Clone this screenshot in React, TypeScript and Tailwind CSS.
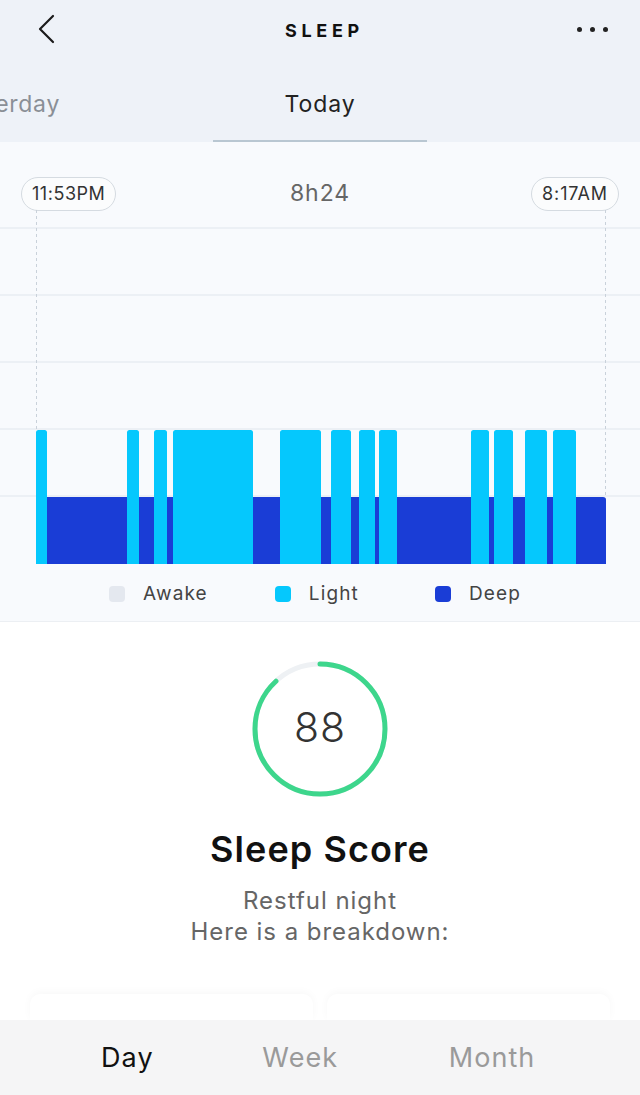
import React from "react";

type Seg = { x: number; w: number };

// light stage segments, measured against the 640px frame
const lightBars: Seg[] = [
  { x: 36, w: 11 },
  { x: 127, w: 12 },
  { x: 154, w: 13 },
  { x: 173, w: 80 },
  { x: 280, w: 41 },
  { x: 331, w: 20 },
  { x: 359, w: 16 },
  { x: 379, w: 18 },
  { x: 471, w: 18 },
  { x: 494, w: 19 },
  { x: 525, w: 22 },
  { x: 553, w: 23 },
];

const gridLines = [18, 85, 152, 219, 286];

const SleepChart: React.FC = () => {
  return (
    <svg width="640" height="354" viewBox="0 0 640 354" className="block">
      {gridLines.map((y) => (
        <line key={y} x1="0" x2="640" y1={y} y2={y} stroke="#e8edf2" strokeWidth="1.5" />
      ))}
      <line x1="36.5" x2="36.5" y1="0" y2="354" stroke="#c9d1da" strokeWidth="1" strokeDasharray="3 3" />
      <line x1="605.5" x2="605.5" y1="0" y2="354" stroke="#c9d1da" strokeWidth="1" strokeDasharray="3 3" />
      <path d="M47 287 H603 Q606 287 606 290 V354 H47 Z" fill="#1a3dd6" />
      {lightBars.map((b) => (
        <path
          key={b.x}
          d={`M${b.x} 354 V222.5 Q${b.x} 220 ${b.x + 2.5} 220 H${b.x + b.w - 2.5} Q${b.x + b.w} 220 ${b.x + b.w} 222.5 V354 Z`}
          fill="#05c8fd"
        />
      ))}
    </svg>
  );
};

const ScoreRing: React.FC<{ value: number }> = ({ value }) => {
  const r = 65;
  const c = 2 * Math.PI * r;
  return (
    <div className="relative w-[140px] h-[140px]">
      <svg width="140" height="140" viewBox="0 0 140 140" className="-rotate-90">
        <circle cx="70" cy="70" r={r} fill="none" stroke="#eef1f4" strokeWidth="5" />
        <circle
          cx="70"
          cy="70"
          r={r}
          fill="none"
          stroke="#3dd68c"
          strokeWidth="5"
          strokeLinecap="round"
          strokeDasharray={`${(c * value) / 100} ${c}`}
        />
      </svg>
      <div className="absolute inset-0 flex items-center justify-center text-[41px] font-light tracking-[0.02em] text-[#333] pb-[3px]">
        {value}
      </div>
    </div>
  );
};

const App: React.FC = () => {
  return (
    <div
      className="w-[640px] h-[1095px] overflow-hidden flex flex-col bg-white"
      style={{ fontFamily: "Inter, 'Noto Sans', sans-serif" }}
    >
      <div className="bg-[#eef2f8]">
        <div className="h-[58px] flex items-center justify-between pl-[36px] pr-[32px]">
          <svg width="22" height="30" viewBox="0 0 22 30" fill="none">
            <path d="M17 2 L4 15 L17 28" stroke="#1b1b1b" strokeWidth="2.2" strokeLinecap="round" strokeLinejoin="round" />
          </svg>
          <div className="text-[18px] font-bold tracking-[0.26em] text-[#111] pl-[14px] pt-[2px]">SLEEP</div>
          <div className="flex gap-[8px]">
            <span className="w-[5px] h-[5px] rounded-full bg-[#222]" />
            <span className="w-[5px] h-[5px] rounded-full bg-[#222]" />
            <span className="w-[5px] h-[5px] rounded-full bg-[#222]" />
          </div>
        </div>
        <div className="grid grid-cols-[213px_214px_213px] h-[84px]">
          <div className="overflow-hidden flex justify-end items-center pr-[153px] whitespace-nowrap text-[23px] tracking-[0.03em] text-[#8a8f96] pt-[8px]">
            Yesterday
          </div>
          <div className="flex flex-col">
            <div className="flex-1 flex items-center justify-center text-[23px] tracking-[0.04em] text-[#222] pt-[10px]">Today</div>
            <div className="h-[2px] bg-[#b9c7d2]" />
          </div>
          <div />
        </div>
      </div>

      <div className="bg-[#f8fafd] border-b border-[#eceff3]">
        <div className="h-[68px] grid grid-cols-[1fr_auto_1fr] items-end px-[21px]">
          <div className="justify-self-start h-[34px] px-[10px] rounded-full border border-[#d5dbe1] bg-[#fbfcfd] flex items-center text-[18px] tracking-[0.03em] text-[#333]">
            11:53PM
          </div>
          <div className="self-start mt-[34px] text-[23px] tracking-[0.04em] text-[#666]">8h24</div>
          <div className="justify-self-end h-[34px] px-[10px] rounded-full border border-[#d5dbe1] bg-[#fbfcfd] flex items-center text-[18px] tracking-[0.05em] text-[#333]">
            8:17AM
          </div>
        </div>
        <SleepChart />
        <div className="h-[57px] flex items-center text-[19px] tracking-[0.06em] text-[#444] pt-[3px]">
          <div className="flex items-center ml-[109px]">
            <span className="w-[16px] h-[16px] rounded-[4px] bg-[#e4e8ef]" />
            <span className="ml-[18px]">Awake</span>
          </div>
          <div className="flex items-center ml-[67px]">
            <span className="w-[16px] h-[16px] rounded-[4px] bg-[#05c8fd]" />
            <span className="ml-[18px]">Light</span>
          </div>
          <div className="flex items-center ml-[76px]">
            <span className="w-[16px] h-[16px] rounded-[4px] bg-[#1a3dd6]" />
            <span className="ml-[18px]">Deep</span>
          </div>
        </div>
      </div>

      <div className="flex-1 flex flex-col items-center pt-[37px]">
        <ScoreRing value={88} />
        <div className="mt-[32px] text-[36px] font-semibold tracking-[0.03em] text-[#111] leading-none">Sleep Score</div>
        <div className="mt-[18px] text-[24px] tracking-[0.04em] text-[#666] text-center leading-[31px]">
          <div>Restful night</div>
          <div>Here is a breakdown:</div>
        </div>
        <div className="mt-auto w-full flex gap-[14px] px-[30px]">
          <div className="flex-1 h-[26px] rounded-t-[10px] bg-white shadow-[0_-2px_8px_rgba(0,0,0,0.03)]" />
          <div className="flex-1 h-[26px] rounded-t-[10px] bg-white shadow-[0_-2px_8px_rgba(0,0,0,0.03)]" />
        </div>
      </div>

      <div className="h-[75px] bg-[#f5f5f6] grid grid-cols-3 items-center text-[27px] tracking-[0.04em] pt-[2px]">
        <div className="text-[#111] pl-[101px]">Day</div>
        <div className="text-[#9a9a9a] pl-[49px]">Week</div>
        <div className="text-[#9a9a9a] pl-[22px]">Month</div>
      </div>
    </div>
  );
};

export default App;
